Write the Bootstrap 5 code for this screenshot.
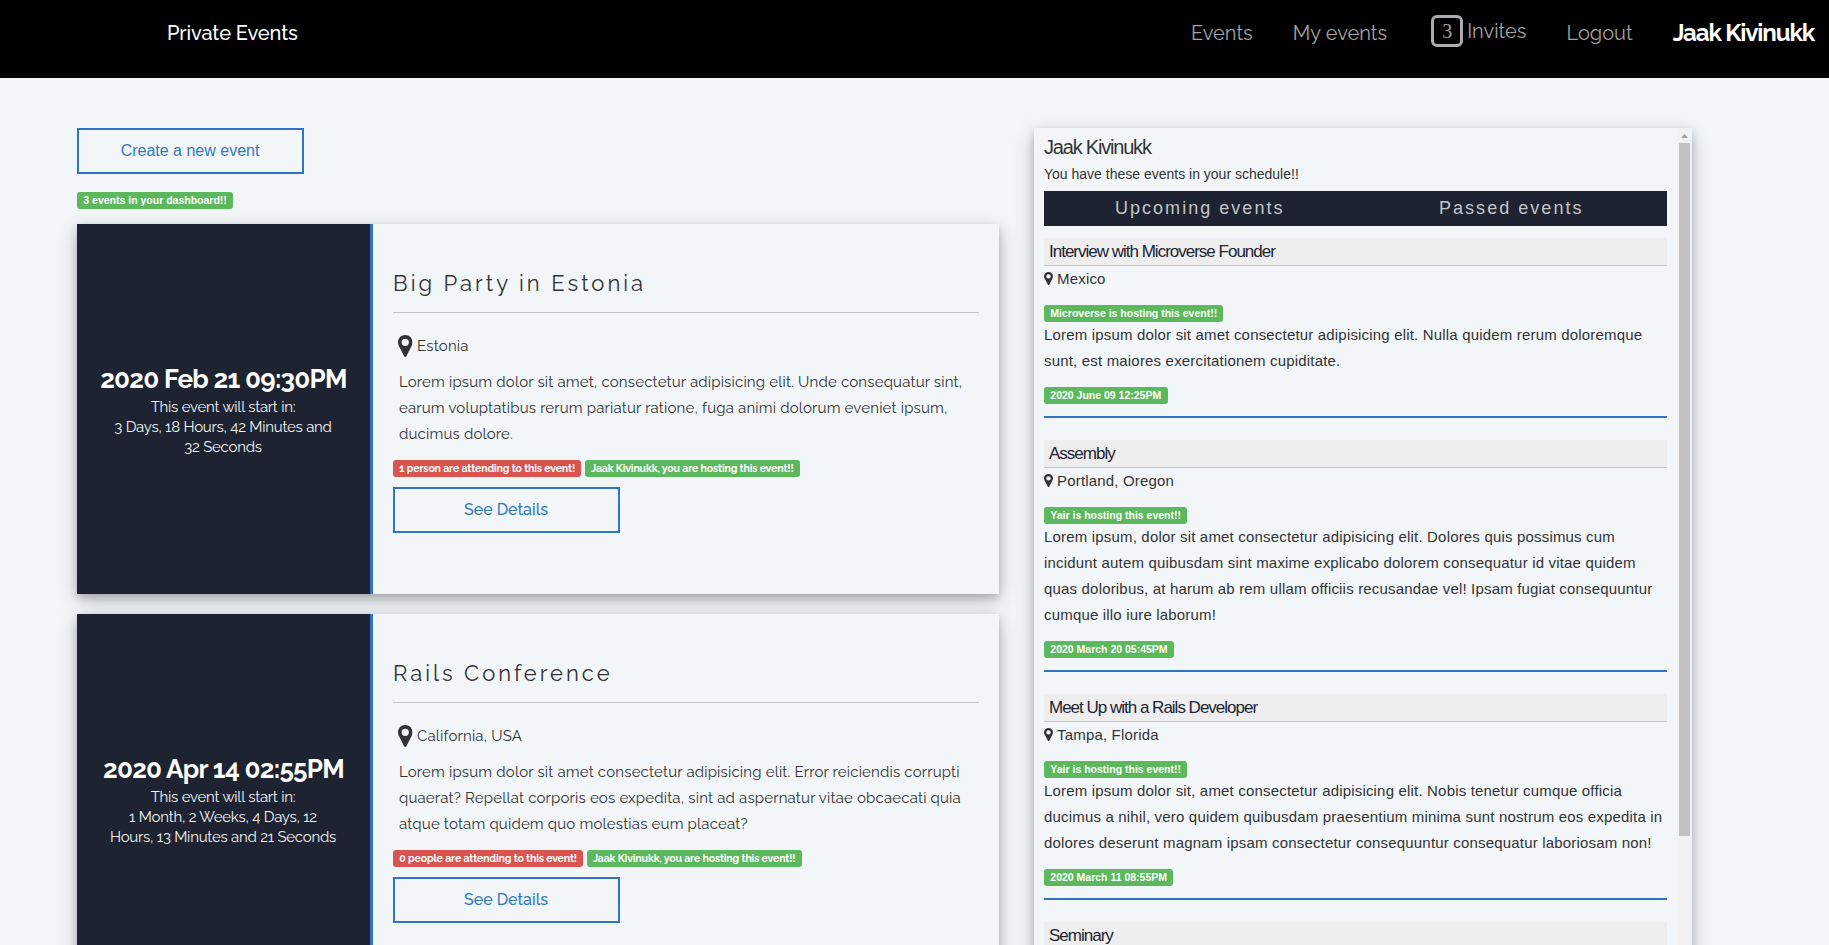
<!DOCTYPE html>
<html lang="en">
<head>
<meta charset="utf-8">
<meta name="viewport" content="width=device-width, initial-scale=1">
<title>Private Events</title>
<link href="https://cdn.jsdelivr.net/npm/bootstrap@5.3.0/dist/css/bootstrap.min.css" rel="stylesheet">
<style>
  :root { --blue: #3273c5; --navy: #1d2331; --page: #f2f6f9; }
  body { background: var(--page); color: #333; font-family: "Liberation Sans", Arial, sans-serif; font-size: 14px; line-height: 20px; height: 945px; overflow: hidden; }
  .ral { font-family: Raleway, sans-serif; }
  a { text-decoration: none; }

  .topbar { height: 78px; background: #000; padding: 13px 15px 0 167px; font-size: 20px; line-height: 40px; }
  .topbar .navbar-brand { color: #fff; font-size: 20px; font-weight: 500; line-height: 40px; letter-spacing: -.1px; padding: 0; margin: 0; }
  .topbar .nav-link { color: #a3a3a3; padding: 0; margin-right: 40px; }
  .topbar .invite-link { display: flex; line-height: 37px; margin-left: 4px; }
  .invite-count { width: 32px; height: 32px; margin: 2px 4px 0 0; border: 3px solid #acacac; border-radius: 6px; font: 400 20px/26px "Liberation Serif", serif; text-align: center; color: #a0a0a0; }
  .user-name { color: #fff; font-size: 24px; font-weight: 700; letter-spacing: -1.12px; }

  .board { padding: 50px 0 0 77px; height: 867px; overflow: hidden; }
  .events-col { width: 922px; }
  .schedule-col { width: 658px; margin-left: 35px; }
  .raised { box-shadow: 0 4px 8px 0 rgba(0,0,0,.2), 0 6px 20px 0 rgba(0,0,0,.19); }
  .btn-outline { display: block; width: 227px; height: 46px; border: 2px solid var(--blue); border-radius: 0; padding: 0 1px 0 0; color: #337ab7; font-size: 16px; line-height: 41px; text-align: center; }
  .tag { display: block; width: fit-content; height: 17px; padding: 0 6.3px; border-radius: 3px; color: #fff; font-size: 10.5px; font-weight: 700; line-height: 16px; white-space: nowrap; }
  .tag-green { background: #5cb85c; }
  .tag-red { background: #d9534f; margin-right: 3.4px; }
  .ral .tag { letter-spacing: -.135px; }
  .dashboard-count { margin: 18px 0 15px; }

  .event { height: 370px; margin-bottom: 20px; background: var(--page); }
  .event-when { width: 296px; flex: none; background: var(--navy); border-right: 3px solid var(--blue); color: #fff; text-align: center; padding-top: 141px; font-size: 15px; letter-spacing: -.25px; }
  .event-when h2 { font-size: 26px; font-weight: 700; line-height: 29px; letter-spacing: -.73px; margin: 0 0 3px; white-space: nowrap; }
  .event-when p { margin: 0 1px 0 0; color: #f2f2f2; }
  .event-what { padding: 38px 20px 0; }
  .event-what h3 { height: 51px; border-bottom: 1px solid #bfc4c7; margin: 0; font-size: 22px; font-weight: 400; letter-spacing: 2.98px; line-height: 42px; }
  .event-what .btn-outline { margin-top: 10px; font-weight: 500; letter-spacing: 0; }
  .place { height: 24px; margin: 22px 0 0 5px; font-size: 15px; letter-spacing: .18px; line-height: 22px; }
  .place svg { width: 14.500px; height: 22px; margin: 0 4.500px 0 0; }
  .blurb { margin: 10px 0 13px; padding-left: 6px; font-size: 15px; line-height: 26px; letter-spacing: .175px; white-space: nowrap; }

  .schedule { height: 860px; background: var(--page); overflow: hidden; }
  .schedule-body { width: 643px; padding: 8px 10px 0; }
  .schedule-body h4 { margin: 0; font-size: 20px; font-weight: 400; letter-spacing: -1.2px; line-height: 22px; height: 31px; }
  .schedule-body .intro { margin: -8px 0 2px; height: 30px; line-height: 30px; }
  .tabs { height: 35px; background: var(--navy); margin-bottom: 12px; font-size: 18px; letter-spacing: 2.03px; line-height: 34px; }
  .tabs a { color: #c4c5c8; }
  .item { margin-bottom: 22px; border-bottom: 2px solid var(--blue); font-size: 15px; line-height: 26px; letter-spacing: .18px; }
  .item h5 { height: 28px; margin: 0; padding-left: 5px; background: #eee; border-bottom: 1px solid #c8c8c8; color: var(--navy); font-size: 17px; font-weight: 400; letter-spacing: -1px; line-height: 27px; }
  .item .where { height: 39px; }
  .item .where svg { width: 9px; height: 13px; margin: 6px 4px 0 0; }
  .item .tag { letter-spacing: 0; }
  .item p { margin: 0 0 13px; white-space: nowrap; }
  .item .when { margin-bottom: 12px; }

  .track { width: 15px; background: #f1f1f1; }
  .track i { display: block; width: 7px; height: 4px; margin: 6px auto 5px; background: #a3a3a3; clip-path: polygon(50% 0, 100% 100%, 0 100%); }
  .track b { display: block; width: 11px; height: 693px; margin-left: 2px; background: #c1c1c1; }
</style>
</head>
<body>
<svg class="d-none">
  <symbol id="pin" viewBox="0 0 16 24" preserveAspectRatio="none"><path fill="#333" fill-rule="evenodd" d="M8 0C3.4 0 0 3.5 0 7.900c0 1.500.3 2.500.9 3.800L6.600 23c.6 1.300 2.200 1.300 2.800 0l5.700-11.300c.6-1.300.9-2.300.9-3.800C16 3.500 12.600 0 8 0zM8 12a4 4 0 1 1 0-8a4 4 0 0 1 0 8z"/></symbol>
</svg>

<nav class="topbar ral d-flex justify-content-between align-items-start">
  <a class="navbar-brand" href="#">Private Events</a>
  <div class="d-flex">
    <a class="nav-link" href="#">Events</a>
    <a class="nav-link" href="#">My events</a>
    <a class="nav-link invite-link" href="#"><span class="invite-count">3</span>Invites</a>
    <a class="nav-link" href="#">Logout</a>
    <span class="user-name">Jaak Kivinukk</span>
  </div>
</nav>

<main class="board d-flex">
  <section class="events-col">
    <a class="btn-outline" href="#">Create a new event</a>
    <span class="tag tag-green dashboard-count">3 events in your dashboard!!</span>

    <article class="event raised ral d-flex">
      <div class="event-when">
        <h2>2020 Feb 21 09:30PM</h2>
        <p>This event will start in:<br>3 Days, 18 Hours, 42 Minutes and<br>32 Seconds</p>
      </div>
      <div class="event-what flex-grow-1">
        <h3>Big Party in Estonia</h3>
        <div class="place d-flex"><svg><use href="#pin"/></svg>Estonia</div>
        <p class="blurb">Lorem ipsum dolor sit amet, consectetur adipisicing elit. Unde consequatur sint,<br>earum voluptatibus rerum pariatur ratione, fuga animi dolorum eveniet ipsum,<br>ducimus dolore.</p>
        <div class="d-flex"><span class="tag tag-red">1 person are attending to this event!</span><span class="tag tag-green">Jaak Kivinukk, you are hosting this event!!</span></div>
        <a class="btn-outline" href="#">See Details</a>
      </div>
    </article>

    <article class="event raised ral d-flex">
      <div class="event-when">
        <h2>2020 Apr 14 02:55PM</h2>
        <p>This event will start in:<br>1 Month, 2 Weeks, 4 Days, 12<br>Hours, 13 Minutes and 21 Seconds</p>
      </div>
      <div class="event-what flex-grow-1">
        <h3>Rails Conference</h3>
        <div class="place d-flex"><svg><use href="#pin"/></svg>California, USA</div>
        <p class="blurb">Lorem ipsum dolor sit amet consectetur adipisicing elit. Error reiciendis corrupti<br>quaerat? Repellat corporis eos expedita, sint ad aspernatur vitae obcaecati quia<br>atque totam quidem quo molestias eum placeat?</p>
        <div class="d-flex"><span class="tag tag-red">0 people are attending to this event!</span><span class="tag tag-green">Jaak Kivinukk, you are hosting this event!!</span></div>
        <a class="btn-outline" href="#">See Details</a>
      </div>
    </article>
  </section>

  <aside class="schedule-col">
    <div class="schedule raised d-flex">
      <div class="schedule-body">
        <h4>Jaak Kivinukk</h4>
        <p class="intro">You have these events in your schedule!!</p>
        <div class="tabs d-flex text-center"><a class="w-50" href="#">Upcoming events</a><a class="w-50" href="#">Passed events</a></div>

        <div class="item">
          <h5>Interview with Microverse Founder</h5>
          <div class="where d-flex"><svg><use href="#pin"/></svg>Mexico</div>
          <span class="tag tag-green">Microverse is hosting this event!!</span>
          <p>Lorem ipsum dolor sit amet consectetur adipisicing elit. Nulla quidem rerum doloremque<br>sunt, est maiores exercitationem cupiditate.</p>
          <span class="tag tag-green when">2020 June 09 12:25PM</span>
        </div>
        <div class="item">
          <h5>Assembly</h5>
          <div class="where d-flex"><svg><use href="#pin"/></svg>Portland, Oregon</div>
          <span class="tag tag-green">Yair is hosting this event!!</span>
          <p>Lorem ipsum, dolor sit amet consectetur adipisicing elit. Dolores quis possimus cum<br>incidunt autem quibusdam sint maxime explicabo dolorem consequatur id vitae quidem<br>quas doloribus, at harum ab rem ullam officiis recusandae vel! Ipsam fugiat consequuntur<br>cumque illo iure laborum!</p>
          <span class="tag tag-green when">2020 March 20 05:45PM</span>
        </div>
        <div class="item">
          <h5>Meet Up with a Rails Developer</h5>
          <div class="where d-flex"><svg><use href="#pin"/></svg>Tampa, Florida</div>
          <span class="tag tag-green">Yair is hosting this event!!</span>
          <p>Lorem ipsum dolor sit, amet consectetur adipisicing elit. Nobis tenetur cumque officia<br>ducimus a nihil, vero quidem quibusdam praesentium minima sunt nostrum eos expedita in<br>dolores deserunt magnam ipsam consectetur consequuntur consequatur laboriosam non!</p>
          <span class="tag tag-green when">2020 March 11 08:55PM</span>
        </div>
        <div class="item">
          <h5>Seminary</h5>
        </div>
      </div>
      <div class="track"><i></i><b></b></div>
    </div>
  </aside>
</main>
<script src="https://cdn.jsdelivr.net/npm/bootstrap@5.3.0/dist/js/bootstrap.bundle.min.js"></script>
</body>
</html>
